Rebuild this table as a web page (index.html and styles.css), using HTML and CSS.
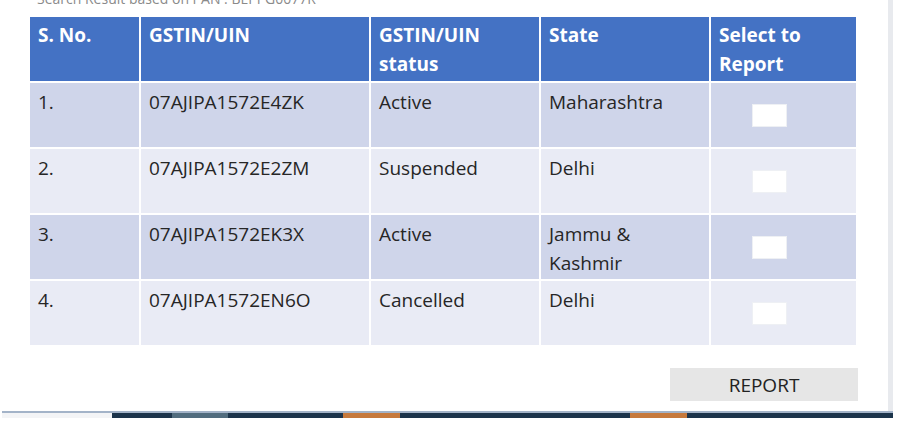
FILE: index.html
```html
<!DOCTYPE html>
<html lang="en">
<head>
    <meta charset="UTF-8">
    <meta name="viewport" content="width=device-width, initial-scale=1.0">
    <title>Search Result</title>
    <link rel="stylesheet" href="styles.css">
</head>
<body>
    <div class="panel">
        <div class="caption"><span>Search Result based on PAN : BEPPG0077R</span></div>
        <table class="results">
            <colgroup>
                <col class="c-sno">
                <col class="c-gstin">
                <col class="c-status">
                <col class="c-state">
                <col class="c-select">
            </colgroup>
            <thead>
                <tr>
                    <th>S. No.</th>
                    <th>GSTIN/UIN</th>
                    <th>GSTIN/UIN<br>status</th>
                    <th>State</th>
                    <th>Select to Report</th>
                </tr>
            </thead>
            <tbody>
                <tr>
                    <td>1.</td>
                    <td>07AJIPA1572E4ZK</td>
                    <td>Active</td>
                    <td>Maharashtra</td>
                    <td class="select"><input type="checkbox" class="pick"></td>
                </tr>
                <tr>
                    <td>2.</td>
                    <td>07AJIPA1572E2ZM</td>
                    <td>Suspended</td>
                    <td>Delhi</td>
                    <td class="select"><input type="checkbox" class="pick"></td>
                </tr>
                <tr>
                    <td>3.</td>
                    <td>07AJIPA1572EK3X</td>
                    <td>Active</td>
                    <td>Jammu &amp;<br>Kashmir</td>
                    <td class="select"><input type="checkbox" class="pick"></td>
                </tr>
                <tr>
                    <td>4.</td>
                    <td>07AJIPA1572EN6O</td>
                    <td>Cancelled</td>
                    <td>Delhi</td>
                    <td class="select"><input type="checkbox" class="pick"></td>
                </tr>
            </tbody>
        </table>
        <div class="actions">
            <button class="report-btn">REPORT</button>
        </div>
    </div>
    <div class="footer-bar">
        <div class="seg seg-light"></div>
        <div class="seg seg-dark seg-1"></div>
        <div class="seg seg-slate"></div>
        <div class="seg seg-dark seg-2"></div>
        <div class="seg seg-orange"></div>
        <div class="seg seg-dark seg-3"></div>
        <div class="seg seg-orange"></div>
        <div class="seg seg-dark seg-4"></div>
    </div>
</body>
</html>
```

FILE: styles.css
```css
body {
    margin: 0;
    background-color: #fff;
    font-family: "Open Sans", "Noto Sans", sans-serif;
}
.panel {
    width: 888px;
    border-right: 5px solid #e8eaee;
    padding-bottom: 10px;
}
.caption {
    height: 7px;
    overflow: hidden;
    padding-left: 37px;
}
.caption span {
    display: block;
    margin-top: -9px;
    font-size: 14px;
    line-height: 16px;
    color: #8a8a8a;
}
.results {
    margin: 10px 0 0 30px;
    width: 826px;
    table-layout: fixed;
    border-collapse: separate;
    border-spacing: 0;
    font-size: 19px;
    line-height: 29px;
}
.c-sno { width: 111px; }
.c-gstin { width: 230px; }
.c-status { width: 170px; }
.c-state { width: 170px; }
.c-select { width: 145px; }
.results th,
.results td {
    box-sizing: border-box;
    height: 66px;
    text-align: left;
    vertical-align: top;
    border-right: 2px solid #fff;
    border-bottom: 2px solid #fff;
}
.results th:last-child,
.results td:last-child {
    border-right: none;
}
.results th {
    background-color: #4472c4;
    color: #fff;
    font-weight: 700;
    padding: 4px 8px 0 8px;
}
.results td {
    color: #262626;
    padding: 5px 8px 0 8px;
}
.results tbody tr:nth-child(odd) td {
    background-color: #cfd5ea;
}
.results tbody tr:nth-child(even) td {
    background-color: #e9ebf5;
}
.results td.select {
    vertical-align: middle;
    padding: 0 0 0 41px;
}
.pick {
    appearance: none;
    display: block;
    width: 35px;
    height: 23px;
    margin: 0;
    background-color: #fff;
    border: 1px solid #eef0f4;
    border-radius: 0;
}
.actions {
    display: flex;
    justify-content: flex-end;
    margin-top: 21px;
    padding-right: 30px;
}
.report-btn {
    width: 188px;
    height: 33px;
    border: none;
    background-color: #e6e6e6;
    color: #222;
    font-family: "Liberation Sans Narrow", "Open Sans", sans-serif;
    font-size: 19px;
    padding: 0;
}
.footer-bar {
    display: flex;
    width: 891px;
    margin-left: 2px;
    height: 6px;
    border-top: 2px solid #a3b3c8;
}
.seg {
    height: 5px;
}
.seg-light { width: 110px; background-color: #f3f4f6; }
.seg-dark { background-color: #1c344b; }
.seg-1 { width: 60px; }
.seg-slate { width: 56px; background-color: #516c7e; }
.seg-2 { width: 115px; }
.seg-orange { width: 57px; background-color: #c6793c; }
.seg-3 { width: 230px; }
.seg-4 { flex: 1; }
```
